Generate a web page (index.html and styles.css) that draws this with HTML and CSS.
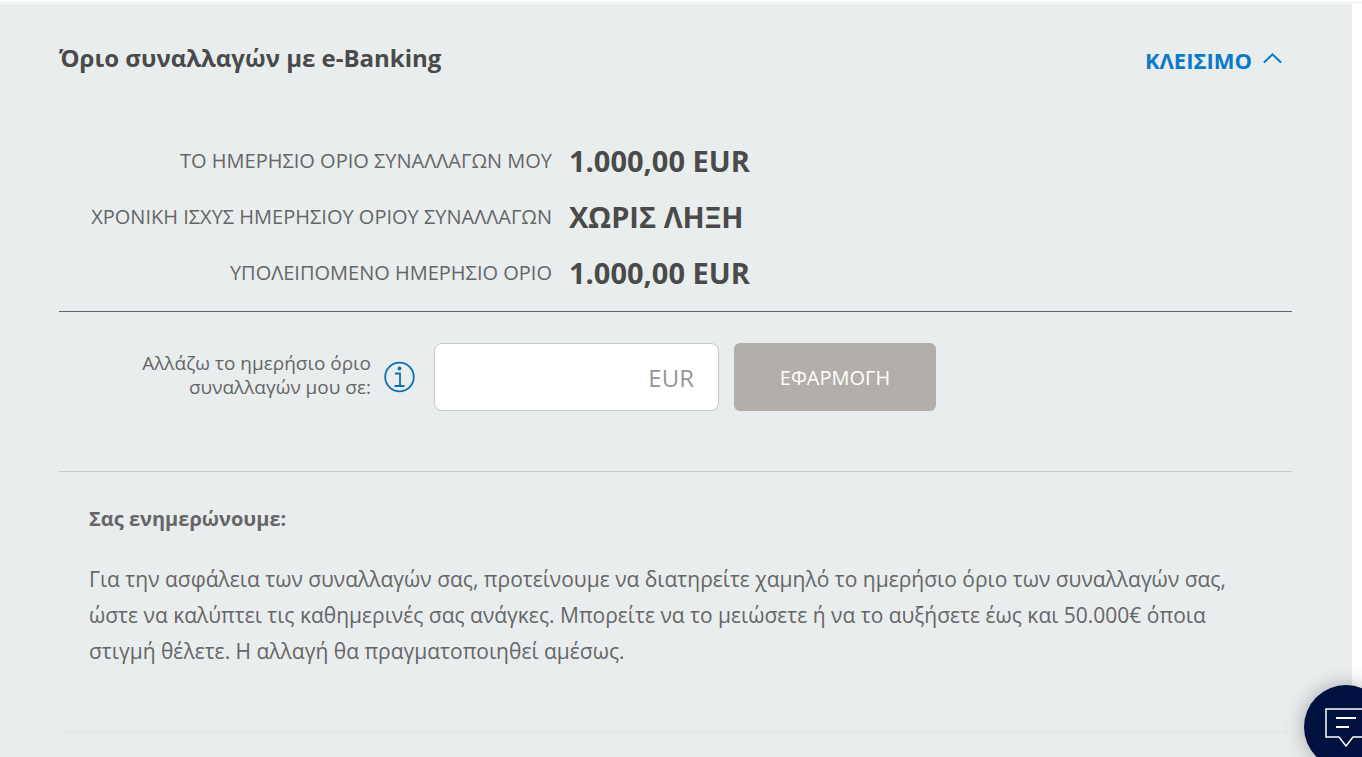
FILE: index.html
```
<!DOCTYPE html>
<html lang="el">
<head>
    <meta charset="UTF-8">
    <meta name="viewport" content="width=device-width, initial-scale=1.0">
    <title>Όριο συναλλαγών με e-Banking</title>
    <link rel="stylesheet" href="styles.css">
</head>
<body>
    <main class="panel">
        <header class="panel-header">
            <h1>Όριο συναλλαγών με e-Banking</h1>
            <button type="button" class="close-btn">
                ΚΛΕΙΣΙΜΟ
                <svg width="20" height="16" viewBox="0 0 20 16" fill="none" stroke="currentColor" stroke-width="2" aria-hidden="true">
                    <path d="M2.500 10L10.500 2.300l8 7.700" stroke-linecap="round"/>
                </svg>
            </button>
        </header>

        <dl class="limits">
            <dt>ΤΟ ΗΜΕΡΗΣΙΟ ΟΡΙΟ ΣΥΝΑΛΛΑΓΩΝ ΜΟΥ</dt>
            <dd>1.000,00 EUR</dd>
            <dt>ΧΡΟΝΙΚΗ ΙΣΧΥΣ ΗΜΕΡΗΣΙΟΥ ΟΡΙΟΥ ΣΥΝΑΛΛΑΓΩΝ</dt>
            <dd>ΧΩΡΙΣ ΛΗΞΗ</dd>
            <dt>ΥΠΟΛΕΙΠΟΜΕΝΟ ΗΜΕΡΗΣΙΟ ΟΡΙΟ</dt>
            <dd>1.000,00 EUR</dd>
        </dl>

        <form class="limit-form">
            <label for="limit">Αλλάζω το ημερήσιο όριο<br>συναλλαγών μου σε:</label>
            <button type="button" class="info-btn" aria-label="Πληροφορίες">
                <svg width="32" height="32" viewBox="0 0 32 32" fill="none" stroke="currentColor" stroke-width="1.8" aria-hidden="true">
                    <circle cx="15.500" cy="16" r="14.300"/>
                    <circle cx="15.500" cy="7.500" r="1.900" fill="currentColor" stroke="none"/>
                    <path d="M11 12.500h5V25M10.500 25H20.500"/>
                </svg>
            </button>
            <input type="text" id="limit" placeholder="EUR">
            <button type="submit" class="apply-btn">ΕΦΑΡΜΟΓΗ</button>
        </form>

        <section class="notice">
            <h2>Σας ενημερώνουμε:</h2>
            <p>Για την ασφάλεια των συναλλαγών σας, προτείνουμε να διατηρείτε χαμηλό το ημερήσιο όριο των συναλλαγών σας, ώστε να καλύπτει τις καθημερινές σας ανάγκες. Μπορείτε να το μειώσετε ή να το αυξήσετε έως και 50.000€ όποια στιγμή θέλετε. Η αλλαγή θα πραγματοποιηθεί αμέσως.</p>
        </section>
    </main>

    <button type="button" class="chat-btn" aria-label="Chat">
        <svg width="44" height="42" viewBox="0 0 44 42" fill="none" stroke="#fff" stroke-width="1.5" aria-hidden="true">
            <path d="M2 3h41v28H29l-7 9-7-9H2z"/>
            <path d="M12 12h20M12 21h13" stroke-width="2"/>
        </svg>
    </button>
</body>
</html>
```
FILE: styles.css
```
* {
    margin: 0;
    padding: 0;
    box-sizing: border-box;
}

body {
    background: #fff;
    border-top: 2px solid #fff;
    color: #666;
    font-family: 'Open Sans', 'Noto Sans', sans-serif;
    overflow: hidden;
}

body::before {
    content: '';
    display: block;
    height: 1px;
    margin-bottom: 1px;
    background: #e9edee;
}

button,
input {
    font-family: inherit;
}

button {
    border: none;
    background: none;
    cursor: pointer;
}

.panel {
    min-height: calc(100vh - 4px);
    margin-right: 10px;
    padding: 36px 60px 0 59px;
    background: #e9edee;
}

.panel-header {
    display: flex;
    justify-content: space-between;
    align-items: flex-start;
    height: 40px;
    padding-right: 10px;
}

.panel-header h1 {
    color: #4a4a4a;
    font-size: 24px;
    font-weight: 700;
    line-height: 36px;
}

.close-btn {
    display: flex;
    align-items: center;
    gap: 10px;
    color: #0b79c9;
    font-size: 22px;
    font-weight: 700;
    line-height: 40px;
}

.limits {
    display: grid;
    grid-template-columns: 493px 1fr;
    grid-auto-rows: 56px;
    align-items: center;
    column-gap: 17px;
    padding: 52px 0 11px;
    border-bottom: 1px solid #5f6669;
}

.limits dt {
    font-size: 20px;
    text-align: right;
    white-space: nowrap;
}

.limits dd {
    color: #4a4a4a;
    font-size: 29px;
    font-weight: 700;
}

.limit-form {
    display: flex;
    align-items: center;
    padding: 31px 0 60px;
    border-bottom: 1px solid #c8cccd;
}

.limit-form label {
    width: 312px;
    padding-bottom: 4px;
    font-size: 19px;
    line-height: 24px;
    text-align: right;
}

.info-btn {
    width: 32px;
    height: 32px;
    margin: 0 18px 0 13px;
    color: #0b70b8;
}

.limit-form input {
    width: 285px;
    height: 68px;
    padding: 0 24px;
    border: 1px solid #c8c8c8;
    border-radius: 8px;
    background: #fff;
    color: #4a4a4a;
    font-size: 24px;
    text-align: right;
}

.limit-form input::placeholder {
    color: #959595;
    opacity: 1;
}

.apply-btn {
    width: 202px;
    height: 68px;
    margin-left: 15px;
    border-radius: 6px;
    background: #b2aea9;
    color: #fff;
    font-size: 20px;
    font-weight: 500;
}

.notice {
    padding: 29px 30px 62px;
    border-bottom: 1px solid #e3e7e8;
}

.notice h2 {
    margin-bottom: 24px;
    font-size: 20px;
    font-weight: 700;
    line-height: 36px;
}

.notice p {
    font-size: 21px;
    line-height: 36px;
}

.chat-btn {
    position: fixed;
    right: -26px;
    bottom: -12px;
    display: flex;
    justify-content: center;
    align-items: center;
    width: 84px;
    height: 84px;
    border-radius: 50%;
    background: #00113f;
    box-shadow: 0 0 20px rgba(0, 0, 0, 0.3);
}
```
